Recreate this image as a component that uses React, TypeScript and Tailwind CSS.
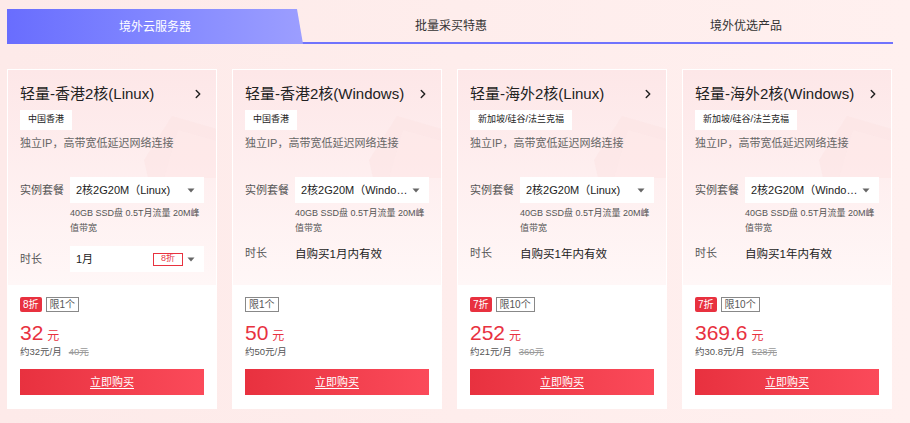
import { ChevronRight } from 'lucide-react';

interface Plan {
  title: string;
  region: string;
  spec: string;
  duration?: string;
  validity?: string;
  discount?: string;
  limit: string;
  price: string;
  monthly: string;
  original?: string;
}

const plans: Plan[] = [
  {
    title: '轻量-香港2核(Linux)',
    region: '中国香港',
    spec: '2核2G20M（Linux)',
    duration: '1月',
    discount: '8折',
    limit: '限1个',
    price: '32',
    monthly: '约32元/月',
    original: '40元',
  },
  {
    title: '轻量-香港2核(Windows)',
    region: '中国香港',
    spec: '2核2G20M（Windows)',
    validity: '自购买1月内有效',
    limit: '限1个',
    price: '50',
    monthly: '约50元/月',
  },
  {
    title: '轻量-海外2核(Linux)',
    region: '新加坡/硅谷/法兰克福',
    spec: '2核2G20M（Linux)',
    validity: '自购买1年内有效',
    discount: '7折',
    limit: '限10个',
    price: '252',
    monthly: '约21元/月',
    original: '360元',
  },
  {
    title: '轻量-海外2核(Windows)',
    region: '新加坡/硅谷/法兰克福',
    spec: '2核2G20M（Windows)',
    validity: '自购买1年内有效',
    discount: '7折',
    limit: '限10个',
    price: '369.6',
    monthly: '约30.8元/月',
    original: '528元',
  },
];

function Caret() {
  return (
    <svg width="8" height="5" viewBox="0 0 8 5" className="shrink-0">
      <path d="M0.5 0.5 L7.5 0.5 L4 4.5 Z" fill="#666" />
    </svg>
  );
}

function PlanCard({ plan }: { plan: Plan }) {
  return (
    <div className="relative w-[210px] h-[340px] bg-white border border-white flex flex-col">
      {/* Upper section */}
      <div className="relative h-[215px] px-[12px] pt-[14px] bg-gradient-to-b from-[#fde7e8] to-[#fff7f7] overflow-hidden">
        <svg
          className="absolute right-[-6px] top-[38px]"
          width="80"
          height="70"
          viewBox="0 0 80 70"
        >
          <path d="M30 8 L78 22 L78 70 L6 70 L2 52 Z" fill="#fbe3e3" opacity="0.55" />
          <path d="M36 22 L78 34 L78 70 L22 70 Z" fill="#fdeaea" opacity="0.7" />
        </svg>

        <div className="relative">
          <div className="flex items-center justify-between h-[20px]">
            <span className="text-[15px] leading-[20px] text-[#222]">{plan.title}</span>
            <ChevronRight size={14} strokeWidth={2.5} className="text-[#222] -mr-[1px]" />
          </div>

          <div className="mt-[6px] inline-flex h-[20px] items-center bg-white px-[8px] text-[9px] text-[#222]">
            {plan.region}
          </div>

          <p className="mt-[5px] text-[11px] leading-[16px] text-[#666]">
            独立IP，高带宽低延迟网络连接
          </p>

          {/* Instance package */}
          <div className="mt-[26px] flex items-start">
            <span className="w-[50px] text-[11px] leading-[26px] text-[#555]">实例套餐</span>
            <div className="w-[134px]">
              <div className="flex h-[26px] items-center gap-[4px] bg-white pl-[6px] pr-[9px]">
                <span className="flex-1 truncate text-[11px] text-[#222]">{plan.spec}</span>
                <Caret />
              </div>
              <p className="mt-[3px] text-[9px] leading-[15px] text-[#555] [word-break:break-all]">
                40GB SSD盘 0.5T月流量 20M峰值带宽
              </p>
            </div>
          </div>

          {/* Duration */}
          {plan.duration ? (
            <div className="mt-[10px] flex items-start">
              <span className="w-[50px] text-[11px] leading-[26px] text-[#555]">时长</span>
              <div className="flex h-[26px] w-[134px] items-center bg-white pl-[6px] pr-[9px]">
                <span className="flex-1 text-[11px] text-[#222]">{plan.duration}</span>
                <span className="mr-[4px] flex h-[13px] w-[30px] items-center justify-center border border-[#e8323f] text-[9px] text-[#e8323f]">
                  {plan.discount}
                </span>
                <Caret />
              </div>
            </div>
          ) : (
            <div className="mt-[10px] flex items-start">
              <span className="w-[50px] text-[11px] leading-[14px] text-[#555]">时长</span>
              <span className="text-[11.5px] leading-[16px] text-[#222]">{plan.validity}</span>
            </div>
          )}
        </div>
      </div>

      {/* Lower section */}
      <div className="flex-1 px-[12px] pt-[12px]">
        <div className="flex items-center gap-[4px]">
          {plan.discount && (
            <span className="flex h-[15px] items-center rounded-[2px] bg-[#e8313f] px-[3px] text-[10px] text-white">
              {plan.discount}
            </span>
          )}
          <span className="flex h-[15px] items-center border border-[#888] px-[3px] text-[10px] text-[#555]">
            {plan.limit}
          </span>
        </div>

        <div className="mt-[9px] flex items-baseline gap-[4px] text-[#e8323f]">
          <span className="text-[21px] leading-[24px]">{plan.price}</span>
          <span className="text-[12px]">元</span>
        </div>

        <div className="flex items-center gap-[7px] text-[9.5px] leading-[14px]">
          <span className="text-[#555]">{plan.monthly}</span>
          {plan.original && <span className="text-[#999] line-through">{plan.original}</span>}
        </div>

        <button className="mt-[10px] flex h-[26px] w-full items-center justify-center bg-gradient-to-r from-[#e8313f] to-[#fb4a5a] text-[11px] text-white underline underline-offset-2">
          立即购买
        </button>
      </div>
    </div>
  );
}

export default function App() {
  return (
    <div className="w-[910px] h-[423px] overflow-hidden bg-gradient-to-r from-[#fdeae9] to-[#fff0ef] px-[7px] pt-[9px] font-['Liberation_Sans','Noto_Sans_CJK_SC',sans-serif]">
      {/* Tabs */}
      <div className="flex h-[35px] w-[886px] items-start border-b-2 border-[#7073fd]">
        <div className="relative -mb-[2px] flex h-[35px] w-[296px] items-center justify-center bg-gradient-to-r from-[#696dfe] to-[#9c9eff] text-[12px] text-white [clip-path:polygon(0_0,290px_0,296px_100%,0_100%)]">
          境外云服务器
        </div>
        <div className="flex h-[33px] w-[296px] items-center justify-center text-[12px] text-[#333]">
          批量采买特惠
        </div>
        <div className="flex h-[33px] w-[294px] items-center justify-center text-[12px] text-[#333]">
          境外优选产品
        </div>
      </div>

      {/* Cards */}
      <div className="mt-[25px] grid w-[885px] grid-cols-4 gap-[15px]">
        {plans.map((plan) => (
          <PlanCard key={plan.title} plan={plan} />
        ))}
      </div>
    </div>
  );
}
